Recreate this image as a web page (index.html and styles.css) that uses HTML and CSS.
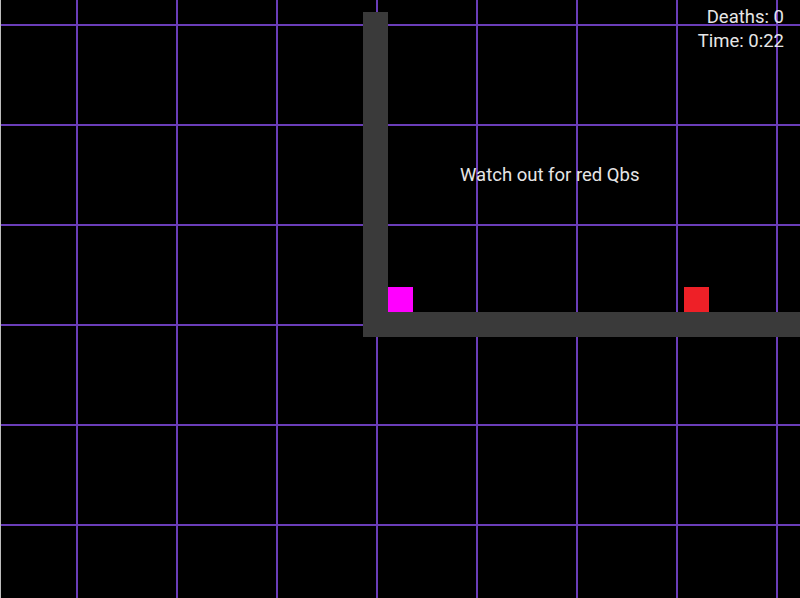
FILE: index.html
```html
<!DOCTYPE html>
<html>
<head>
<meta charset="utf-8">
<link rel="stylesheet" href="styles.css">
</head>
<body>
<div class="game">
  <div class="hud">
    <div class="hud-line">Deaths: 0</div>
    <div class="hud-line">Time: 0:22</div>
  </div>
  <div class="hint">Watch out for red Qbs</div>
  <div class="wall wall-v"></div>
  <div class="wall wall-h"></div>
  <div class="qb player"></div>
  <div class="qb enemy"></div>
</div>
</body>
</html>
```
FILE: styles.css
```css
html, body {
  margin: 0;
  padding: 0;
  background: #000;
}
.game {
  position: relative;
  width: 800px;
  height: 598px;
  overflow: hidden;
  background-color: #000;
  background-image:
    linear-gradient(to right, #6a3db8 2px, transparent 2px),
    linear-gradient(to bottom, #6a3db8 2px, transparent 2px);
  background-size: 100px 100px;
  background-position: 75px 24px;
  border-left: 1px solid #bdbdbd;
  box-sizing: border-box;
  font-family: Roboto, "Liberation Sans", sans-serif;
  color: #e6e6e6;
}
.hud {
  position: absolute;
  top: 5px;
  right: 16px;
  display: flex;
  flex-direction: column;
  align-items: flex-end;
  font-size: 18.5px;
  line-height: 24px;
}
.hint {
  position: absolute;
  left: 459px;
  top: 163px;
  font-size: 18.5px;
  line-height: 24px;
}
.wall {
  position: absolute;
  background: #3a3a3a;
}
.wall-v {
  left: 362px;
  top: 12px;
  width: 25px;
  height: 325px;
}
.wall-h {
  left: 362px;
  top: 312px;
  width: 438px;
  height: 25px;
}
.qb {
  position: absolute;
  top: 287px;
  width: 25px;
  height: 25px;
}
.player {
  left: 387px;
  background: #ff00ff;
}
.enemy {
  left: 683px;
  background: #ee2027;
}
```
